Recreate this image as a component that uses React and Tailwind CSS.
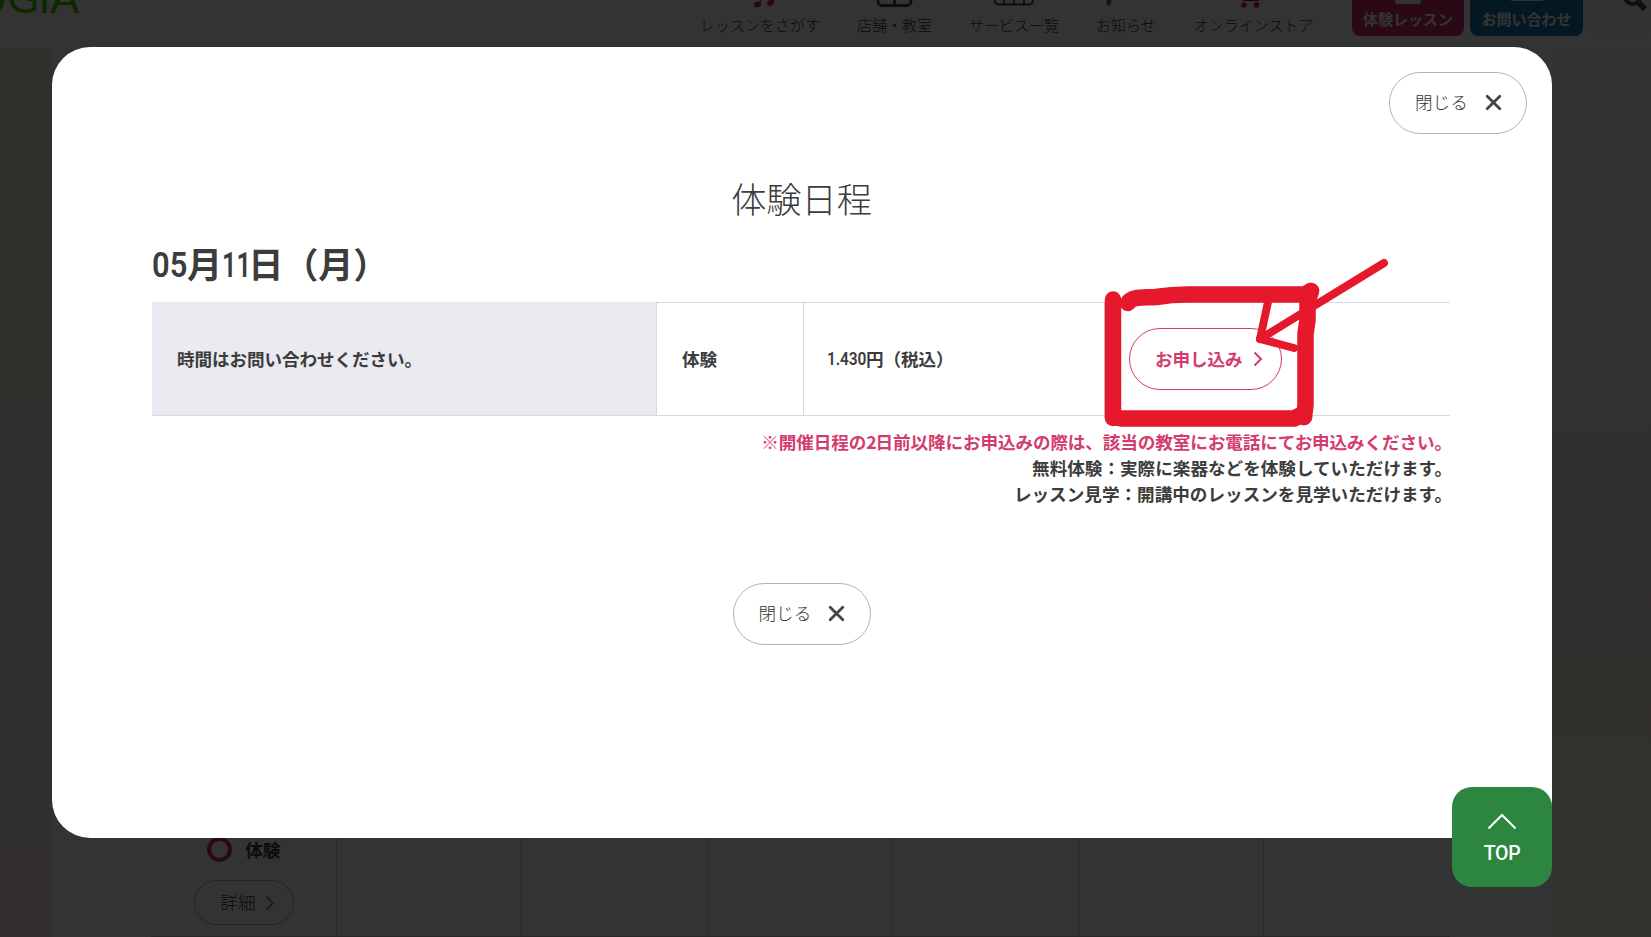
import React, { useState } from "react";

const menu = [
  { id: "lesson", texto: "レッスンをさがす" },
  { id: "shop", texto: "店舗・教室" },
  { id: "service", texto: "サービス一覧" },
  { id: "news", texto: "お知らせ" },
  { id: "store", texto: "オンラインストア" }
];

const notes = [
  "無料体験：実際に楽器などを体験していただけます。",
  "レッスン見学：開講中のレッスンを見学いただけます。"
];

function MenuIcon({ id }) {
  return (
    <svg className="w-10 h-2.5" viewBox="0 0 40 10" fill="none">
      {id === "lesson" && (
        <g fill="#d81b60">
          <ellipse cx="17.5" cy="4.5" rx="3.6" ry="2.8" transform="rotate(-20 17.5 4.5)" />
          <ellipse cx="30.5" cy="3" rx="3.6" ry="2.8" transform="rotate(-20 30.5 3)" />
          <path d="M19.5 0h1.6v4h-1.6zM32.5 0h1.6v3h-1.6z" />
        </g>
      )}
      {id === "shop" && (
        <path d="M3 -6V1.5a4 4 0 0 0 4 4h25a4 4 0 0 0 4-4V-6M19.500 -4V5" stroke="#444" strokeWidth="2.800" />
      )}
      {id === "service" && (
        <path d="M.8 -6V1a3.500 3.500 0 0 0 3.500 3.500h31A3.500 3.500 0 0 0 38.800 1V-6M10 -4V4M20 -4V4M30 -4V4" stroke="#444" strokeWidth="1.800" />
      )}
      {id === "news" && <path d="M1 0h5L4.500 3.500a2 2 0 0 1-4 0z" fill="#0b74b8" />}
      {id === "store" && (
        <g>
          <path d="M9 .5h16" stroke="#444" strokeWidth="1.200" />
          <circle cx="10" cy="5" r="2.800" fill="#d81b60" />
          <circle cx="22.500" cy="5" r="2.800" fill="#d81b60" />
        </g>
      )}
    </svg>
  );
}

function Header() {
  return (
    <header className="flex h-12 shrink-0 bg-white overflow-hidden">
      <div className="flex w-[700px] items-end">
        <span className="-ml-[24px] pb-[30px] font-[Lato] font-normal text-[43px] leading-[43px] tracking-[-0.3px] text-[#3fc800]">
          UGIA
        </span>
      </div>
      <nav className="flex w-[652px] gap-[37px] text-[15px] leading-5 font-light">
        {menu.map(function (item) {
          return (
            <a key={item.id} className="flex flex-col items-center gap-[5px] whitespace-nowrap last:ml-px">
              <MenuIcon id={item.id} />
              {item.texto}
            </a>
          );
        })}
      </nav>
      <div className="flex gap-1.5 h-9 font-bold text-[15px] leading-5 text-white">
        <a className="flex w-28 flex-col items-center gap-[5px] rounded-b-lg bg-[#d42c68]">
          <span className="h-1 w-[26px] rounded-b-xs bg-white" />
          体験レッスン
        </a>
        <a className="flex w-[113px] flex-col items-center gap-2 rounded-b-lg bg-[#2073b2]">
          <span className="h-px w-8 bg-white" />
          お問い合わせ
        </a>
        <a className="ml-px flex w-[61px] justify-end rounded-b-lg bg-[#fafafa]">
          <svg className="w-8 h-4" viewBox="0 0 32 16" fill="none" stroke="#4a4a4a">
            <circle cx="13.500" cy="-3.500" r="7.500" strokeWidth="4" />
            <path d="M19 2l7 7" strokeWidth="6" />
          </svg>
        </a>
      </div>
    </header>
  );
}

function Calendar() {
  return (
    <main className="flex flex-1 bg-[linear-gradient(180deg,#f1f4e0_0%,#eff2de_25%,#f5efe6_50%,#faebea_75%,#fae8e6_100%)]">
      <div className="w-[1500px] ml-[52px] bg-white pl-[99px] pr-[102px] pt-[777px]">
        <div className="grid h-[112px] grid-cols-7 border-b border-[#c8c9d0]">
          <div className="flex flex-col items-center border-r border-[#c8c9d0] pl-0.5">
            <div className="flex h-[49px] items-center gap-[13px] text-[17.6px] font-bold leading-none -ml-px">
              <span className="size-[25px] rounded-full border-4 border-[#d42c68]" />
              体験
            </div>
            <button className="mt-1.5 flex h-[45px] w-[100px] items-center gap-2.5 rounded-full border border-[#aaa] pl-[25px] text-[17.6px] font-light">
              詳細
              <svg className="w-2.5 h-4" viewBox="0 0 10 16" fill="none" stroke="#888" strokeWidth="1.800">
                <path d="M1.500 1.500L8 8l-6.500 6.500" />
              </svg>
            </button>
          </div>
          {[1, 2, 3, 4, 5].map(function (dia) {
            return <div key={dia} className="border-r border-[#c8c9d0]" />;
          })}
        </div>
      </div>
      <div className="flex-1 bg-[linear-gradient(180deg,#fafaf2_0%,#f8f0f2_25%,#fbebee_52%,#fbeee2_70%,#fcf5df_85%,#f7f7dc_100%)]" />
    </main>
  );
}

function CloseButton({ onClick }) {
  return (
    <button
      onClick={onClick}
      className="flex h-[62px] w-[138px] items-center justify-between rounded-full border border-[#b3b3b3] pl-[25px] pr-[24.5px] pb-px text-[17.6px] font-light text-[#333]"
    >
      閉じる
      <svg className="size-[17px]" viewBox="0 0 17 17" fill="none" stroke="#444" strokeWidth="2.800" strokeLinecap="round">
        <path d="M2.200 2.200l12.600 12.600M14.800 2.200L2.200 14.800" />
      </svg>
    </button>
  );
}

function ScheduleDialog({ onClose }) {
  return (
    <section className="ml-[52px] mt-[47px] flex h-[791px] w-[1500px] flex-col rounded-[38px] bg-white pl-[100px] pr-[102px]">
      <div className="-mr-[77px] flex justify-end pt-[25px]">
        <CloseButton onClick={onClose} />
      </div>

      <h2 className="mt-[38px] -mr-px text-center text-[35.2px] leading-[52px] font-light">体験日程</h2>

      <h3 className="mt-[13px] flex h-[52px] text-[35.2px] leading-[52px] font-bold">
        <span className="w-[35px] pt-0.5 origin-left scale-x-[.88] font-[Roboto,sans-serif] font-semibold">05</span>
        月
        <span className="w-[26px] pt-0.5 origin-left scale-x-[.72] font-[Roboto,sans-serif] font-semibold">11</span>
        <span className="tracking-[-0.2px]">日（月）</span>
      </h3>

      <div className="mt-[13px] grid h-[114px] grid-cols-[504px_147px_301px_346px] text-[17.6px] font-bold tracking-[-0.1px] border-b border-[#d6d8e3]">
        <div className="flex items-center bg-[#eaebf0] pl-[25px] pt-px">時間はお問い合わせください。</div>
        <div className="flex items-center border-l border-t border-[#d6d8e3] pl-[25px]">体験</div>
        <div className="flex items-center border-l border-t border-[#d6d8e3] pl-[23px]">
          <span className="w-[39px] pt-px origin-left scale-x-[.88] font-[Roboto,sans-serif] font-semibold">1.430</span>
          円（税込）
        </div>
        <div className="flex items-center border-l border-t border-[#d6d8e3] pl-6 pb-px">
          <button className="flex h-[62px] w-[153px] items-center gap-[11px] rounded-full border border-[#d33d6d] pl-[25px] pt-px tracking-[-0.1px] text-[#d33d6d]">
            お申し込み
            <svg className="w-2.5 h-4" viewBox="0 0 10 16" fill="none" stroke="currentColor" strokeWidth="2">
              <path d="M1.500 1.500L8 8l-6.500 6.500" />
            </svg>
          </button>
        </div>
      </div>

      <div className="mt-[12.5px] -mr-0.5 text-right text-[17.6px] leading-[26px] font-bold">
        <p className="tracking-[-0.11px] text-[#d33d6d]">
          ※開催日程の<span className="tracking-[-1px]">2</span>日前以降にお申込みの際は、該当の教室にお電話にてお申込みください。
        </p>
        {notes.map(function (note) {
          return <p key={note}>{note}</p>;
        })}
      </div>

      <div className="mt-[76.5px] -mr-px flex justify-center">
        <CloseButton onClick={onClose} />
      </div>
    </section>
  );
}

// hand-drawn marker that points at the apply button
function Marker() {
  return (
    <svg
      className="pointer-events-none absolute left-[1090px] top-[250px] h-[190px] w-[310px]"
      viewBox="1090 250 310 190"
      fill="none"
      stroke="#e5182c"
      strokeLinecap="round"
      strokeLinejoin="round"
    >
      <g strokeWidth="16.500">
        <path d="M1113 299.500V418" />
        <path d="M1128 303C1132 296 1144 298 1156 297C1168 295 1175 294.500 1188 294.500H1305L1311 291" />
        <path d="M1311 291L1307.500 302V320L1305.500 334V405L1304 417" />
        <path d="M1113 417L1121 418.500H1294L1299 416L1304 417" />
      </g>
      <g strokeWidth="8">
        <path d="M1384 263L1260 339" />
        <path d="M1268 302L1260 339L1294 348" />
      </g>
    </svg>
  );
}

function App() {
  const [abierto, setAbierto] = useState(true);

  return (
    <div className="relative flex h-[937px] w-[1651px] flex-col overflow-hidden text-[#3c3c3c] font-['Noto_Sans_CJK_JP',sans-serif]">
      <Header />
      <Calendar />

      {abierto && (
        <div className="absolute inset-0 bg-black/80">
          <ScheduleDialog
            onClose={function () {
              setAbierto(false);
            }}
          />
          <Marker />
        </div>
      )}

      <a className="absolute left-[1452px] top-[787px] flex size-[100px] flex-col items-center rounded-[20px] bg-[#2d8640] pt-[26px] text-white">
        <svg className="w-[30px] h-[17px]" viewBox="0 0 30 17" fill="none" stroke="currentColor" strokeWidth="2">
          <path d="M1.500 15.500L15 2l13.500 13.500" />
        </svg>
        <span className="mt-3 font-[Roboto,sans-serif] font-medium text-[19.500px] leading-6 tracking-[-0.3px]">TOP</span>
      </a>
    </div>
  );
}

export default App;
